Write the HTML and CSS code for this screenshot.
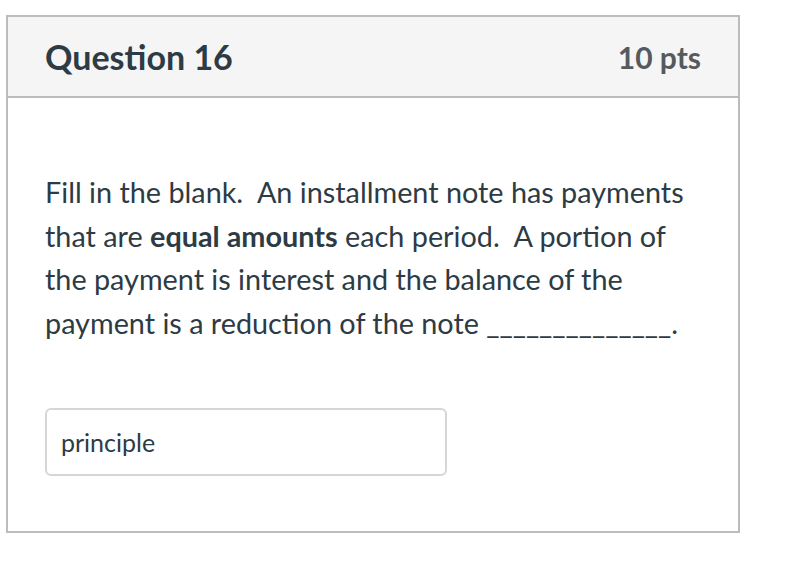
FILE: index.html
```html
<!DOCTYPE html>
<html>
<head>
<meta charset="utf-8">
<link rel="stylesheet" href="styles.css">
</head>
<body>
<div class="card">
  <div class="card-header">
    <h2 class="title">Question 16</h2>
    <span class="pts">10 pts</span>
  </div>
  <div class="card-body">
    <p class="question">Fill in the blank.&nbsp; An installment note has payments that are <strong>equal amounts</strong> each period.&nbsp; A portion of the payment is interest and the balance of the payment is a reduction of the note ______________.</p>
    <div class="answer">principle</div>
  </div>
</div>
</body>
</html>
```

FILE: styles.css
```css
html, body {
  margin: 0;
  padding: 0;
  background: #ffffff;
}
body {
  font-family: Lato, "Noto Sans", sans-serif;
  color: #2d3b45;
}
.card {
  margin: 15px 0 0 6px;
  width: 734px;
  height: 518px;
  box-sizing: border-box;
  border: 2px solid #bcbcbc;
}
.card-header {
  display: flex;
  align-items: center;
  justify-content: space-between;
  height: 81px;
  box-sizing: border-box;
  padding: 0 37px;
  background: #f5f5f5;
  border-bottom: 2px solid #bcbcbc;
}
.title {
  margin: 0;
  font-size: 34px;
  font-weight: 700;
  color: #2d3b45;
}
.pts {
  font-size: 30px;
  font-weight: 700;
  color: #555a5e;
}
.card-body {
  padding: 73px 37px 0 37px;
}
.question {
  margin: 0;
  font-size: 28.8px;
  line-height: 43.6px;
}
.question strong {
  font-weight: 700;
}
.answer {
  margin-top: 63px;
  width: 402px;
  height: 68px;
  box-sizing: border-box;
  border: 2px solid #d4d7da;
  border-radius: 6px;
  padding: 0 14px;
  display: flex;
  align-items: center;
  font-size: 25px;
}
```
